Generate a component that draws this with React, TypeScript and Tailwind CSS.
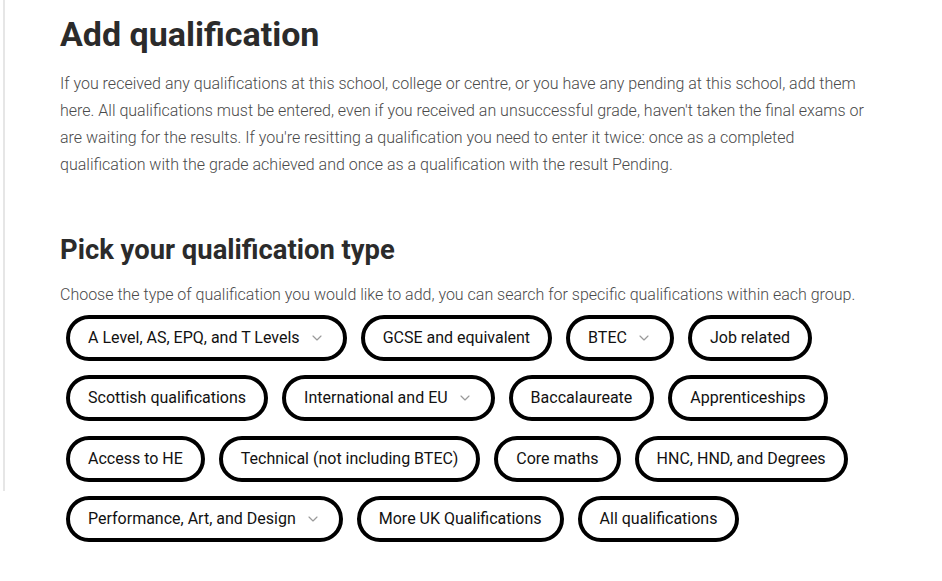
import { ChevronDown } from 'lucide-react';

const types = [
  { label: "A Level, AS, EPQ, and T Levels", menu: true },
  { label: "GCSE and equivalent" },
  { label: "BTEC", menu: true },
  { label: "Job related" },
  { label: "Scottish qualifications" },
  { label: "International and EU", menu: true },
  { label: "Baccalaureate" },
  { label: "Apprenticeships" },
  { label: "Access to HE" },
  { label: "Technical (not including BTEC)" },
  { label: "Core maths" },
  { label: "HNC, HND, and Degrees" },
  { label: "Performance, Art, and Design", menu: true },
  { label: "More UK Qualifications" },
  { label: "All qualifications" },
];

export default function App() {
  return (
    <div className="flex min-h-screen bg-white font-['Roboto',_'Liberation_Sans',_sans-serif]">
      {/* side rule */}
      <div className="ml-[3px] h-[491px] w-[2px] shrink-0 bg-[#e6e6e6]" />

      <main className="ml-[55px] w-[820px] pt-[14px]">
        <h1 className="text-[34px] font-bold leading-[41px] text-[#2b2b2b]">Add qualification</h1>
        <p className="mt-[15px] text-[16px] font-light leading-[27px] text-[#4a4a4a]">
          If you received any qualifications at this school, college or centre, or you have any pending at this school, add them
          here. All qualifications must be entered, even if you received an unsuccessful grade, haven't taken the final exams or
          are waiting for the results. If you're resitting a qualification you need to enter it twice: once as a completed
          qualification with the grade achieved and once as a qualification with the result Pending.
        </p>

        <h2 className="mt-[55px] text-[27.4px] font-bold leading-[34px] text-[#2b2b2b]">Pick your qualification type</h2>
        <p className="mt-[14px] w-[880px] text-[16px] font-light leading-[27px] text-[#4a4a4a]">
          Choose the type of qualification you would like to add, you can search for specific qualifications within each group.
        </p>

        {/* qualification type pills */}
        <div className="ml-[6px] mt-[7px] flex w-[870px] flex-wrap gap-x-[14px] gap-y-[14.3px]">
          {types.map((t) => (
            <button
              key={t.label}
              className="flex h-[46px] items-center gap-[9px] rounded-full border-[4px] border-black bg-white px-[18px] text-[16px] text-[#111]"
            >
              <span>{t.label}</span>
              {t.menu && <ChevronDown className="h-[16px] w-[16px] text-[#9a9a9a]" strokeWidth={1.75} />}
            </button>
          ))}
        </div>
      </main>
    </div>
  );
}
